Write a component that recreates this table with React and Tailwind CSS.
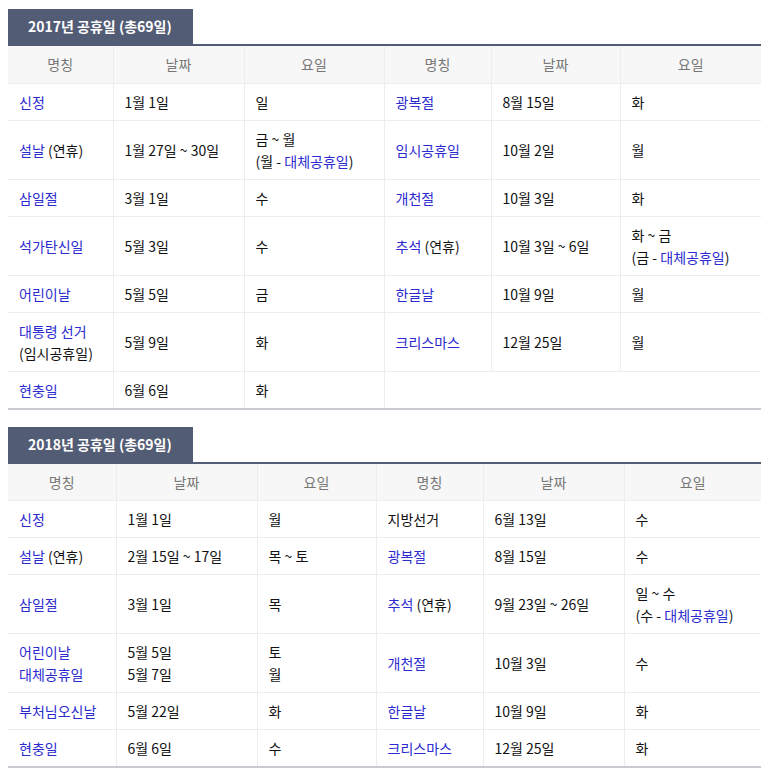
import React from 'react';

const L = ({ children }) => <span className="text-[#2b2bd0]">{children}</span>;

const y2017 = [
	[<L>신정</L>, '1월 1일', '일', <L>광복절</L>, '8월 15일', '화'],
	[<><L>설날</L> (연휴)</>, '1월 27일 ~ 30일', <>금 ~ 월<br />(월 - <L>대체공휴일</L>)</>, <L>임시공휴일</L>, '10월 2일', '월'],
	[<L>삼일절</L>, '3월 1일', '수', <L>개천절</L>, '10월 3일', '화'],
	[<L>석가탄신일</L>, '5월 3일', '수', <><L>추석</L> (연휴)</>, '10월 3일 ~ 6일', <>화 ~ 금<br />(금 - <L>대체공휴일</L>)</>],
	[<L>어린이날</L>, '5월 5일', '금', <L>한글날</L>, '10월 9일', '월'],
	[<><L>대통령 선거</L><br />(임시공휴일)</>, '5월 9일', '화', <L>크리스마스</L>, '12월 25일', '월'],
	[<L>현충일</L>, '6월 6일', '화', null],
];

const y2018 = [
	[<L>신정</L>, '1월 1일', '월', '지방선거', '6월 13일', '수'],
	[<><L>설날</L> (연휴)</>, '2월 15일 ~ 17일', '목 ~ 토', <L>광복절</L>, '8월 15일', '수'],
	[<L>삼일절</L>, '3월 1일', '목', <><L>추석</L> (연휴)</>, '9월 23일 ~ 26일', <>일 ~ 수<br />(수 - <L>대체공휴일</L>)</>],
	[<><L>어린이날</L><br /><L>대체공휴일</L></>, <>5월 5일<br />5월 7일</>, <>토<br />월</>, <L>개천절</L>, '10월 3일', '수'],
	[<L>부처님오신날</L>, '5월 22일', '화', <L>한글날</L>, '10월 9일', '화'],
	[<L>현충일</L>, '6월 6일', '수', <L>크리스마스</L>, '12월 25일', '화'],
];

const heads = ['명칭', '날짜', '요일', '명칭', '날짜', '요일'];

function HolidayTable({ title, rows, widths }) {
	return (
		<div>
			<div className="inline-block bg-[#535c75] text-white font-bold text-[14px] leading-[35px] h-[35px] pl-[20px] w-[185px]">
				{title}
			</div>
			<table className="w-[753px] table-fixed border-collapse border-t-2 border-t-[#535c75] border-b-2 border-b-[#c8c9d1]">
				<colgroup>
					{widths.map((w, i) => (
						<col key={i} style={{ width: w }} />
					))}
				</colgroup>
				<thead>
					<tr className="bg-[#f7f7f7]">
						{heads.map((h, i) => (
							<th
								key={i}
								className={`h-[38px] font-normal text-[#777] text-center border-b border-[#ededed] ${i < 5 ? 'border-r' : ''}`}
							>
								{h}
							</th>
						))}
					</tr>
				</thead>
				<tbody>
					{rows.map((r, ri) => (
						<tr key={ri} className={ri < rows.length - 1 ? 'border-b border-[#ededed]' : ''}>
							{r[3] === null ? (
								<>
									{r.slice(0, 3).map((c, ci) => (
										<td key={ci} className="px-[11px] py-[7px] border-r border-[#ededed]">{c}</td>
									))}
									<td colSpan={3}></td>
								</>
							) : (
								r.map((c, ci) => (
									<td
										key={ci}
										className={`px-[11px] py-[7px] ${ci < 5 ? 'border-r border-[#ededed]' : ''}`}
									>
										{c}
									</td>
								))
							)}
						</tr>
					))}
				</tbody>
			</table>
		</div>
	);
}

export default function App() {
	return (
		<div
			className="w-[773px] bg-white px-[8px] pt-[9px] text-[14px] leading-[22px] text-[#111]"
			style={{ fontFamily: '"Noto Sans CJK KR", "Noto Sans", sans-serif' }}
		>
			<HolidayTable title="2017년 공휴일 (총69일)" rows={y2017} widths={[105, 131, 140, 107, 129, 141]} />
			<div className="h-[17px]" />
			<HolidayTable title="2018년 공휴일 (총69일)" rows={y2018} widths={[108, 141, 119, 107, 141, 137]} />
		</div>
	);
}
